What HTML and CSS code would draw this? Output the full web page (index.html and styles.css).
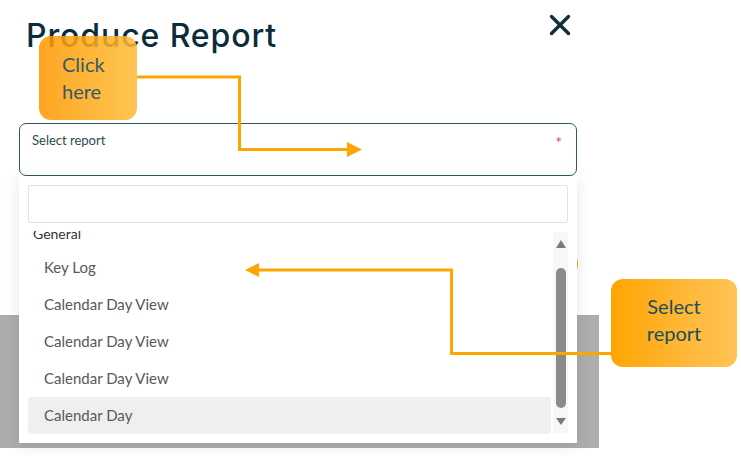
FILE: index.html
```html
<!DOCTYPE html>
<html lang="en">
<head>
<meta charset="utf-8">
<title>Produce Report</title>
<link rel="stylesheet" href="styles.css">
</head>
<body>
<div class="stage">
  <div class="modal">
    <div class="modal-header">
      <h1 class="title">Produce Report</h1>
      <button class="close" aria-label="Close">
        <svg width="22" height="22" viewBox="0 0 22 22"><path d="M2.5 2.5 L19.5 19.5 M19.5 2.5 L2.5 19.5" stroke="#0f2e3b" stroke-width="3.4" stroke-linecap="round" fill="none"/></svg>
      </button>
    </div>
    <div class="select-wrap">
      <div class="select">
        <span class="select-label">Select report</span>
        <span class="required">*</span>
      </div>
      <div class="dropdown">
        <div class="search"></div>
        <div class="dropdown-body">
          <div class="list">
            <div class="group">General</div>
            <div class="item">Key Log</div>
            <div class="item">Calendar Day View</div>
            <div class="item">Calendar Day View</div>
            <div class="item">Calendar Day View</div>
            <div class="item active">Calendar Day</div>
          </div>
          <div class="scrollbar">
            <span class="sb-up"></span>
            <span class="sb-thumb"></span>
            <span class="sb-down"></span>
          </div>
        </div>
      </div>
    </div>
    <div class="actions"><span class="produce-btn"></span></div>
  </div>
  <div class="backdrop"></div>
</div>

<svg class="arrows" width="741" height="456" viewBox="0 0 741 456">
  <path d="M137 77 H239.5 V149.5 H349" stroke="#ffa500" stroke-width="3" fill="none"/>
  <polygon points="347,142 362,149.5 347,157" fill="#ffa500"/>
  <path d="M612 353.5 H451.5 V270 H258" stroke="#ffa500" stroke-width="3" fill="none"/>
  <polygon points="259,263 245,270 259,277" fill="#ffa500"/>
</svg>

<div class="callout callout-click">Click<br>here</div>
<div class="callout callout-select">Select<br>report</div>
</body>
</html>
```

FILE: styles.css
```css
html, body {
  margin: 0;
  padding: 0;
}
body {
  width: 741px;
  height: 456px;
  position: relative;
  overflow: hidden;
  background: #ffffff;
  font-family: "Lato", "Liberation Sans", sans-serif;
}
.stage {
  width: 599px;
}
.modal {
  position: relative;
  height: 315px;
  box-sizing: border-box;
  padding: 0 22px 0 19px;
  background: #ffffff;
  border-radius: 0 0 4px 4px;
  z-index: 2;
}
.modal-header {
  display: flex;
  justify-content: space-between;
  align-items: flex-start;
  height: 56px;
  padding-top: 16px;
  box-sizing: border-box;
}
.title {
  margin: 0 0 0 7px;
  font-family: "Inter", "Lato", sans-serif;
  font-size: 32px;
  line-height: 40px;
  font-weight: 500;
  color: #0b2c3b;
  letter-spacing: 0.9px;
}
.close {
  margin: -2px 6px 0 0;
  padding: 0;
  border: 0;
  background: none;
  width: 22px;
  height: 22px;
  display: block;
}
.close svg {
  display: block;
}
.select-wrap {
  position: relative;
  margin-top: 67px;
}
.select {
  height: 53px;
  box-sizing: border-box;
  border: 1px solid #2f5862;
  border-radius: 7px;
  padding: 8px 14px 0 12px;
  display: flex;
  justify-content: space-between;
  align-items: flex-start;
}
.select-label {
  font-size: 13px;
  line-height: 16px;
  color: #2b4a50;
}
.required {
  font-size: 16px;
  line-height: 16px;
  color: #e8474a;
  margin-top: 2px;
}
.dropdown {
  position: absolute;
  top: 100%;
  left: 0;
  right: 0;
  height: 267px;
  box-sizing: border-box;
  padding: 9px 9px 0 9px;
  background: #ffffff;
  box-shadow: 0 3px 14px rgba(0, 0, 0, 0.10);
  z-index: 5;
}
.search {
  height: 38px;
  box-sizing: border-box;
  border: 1px solid #e2e2e2;
  border-radius: 2px;
  background: #fff;
}
.dropdown-body {
  display: flex;
  margin-top: 8px;
  height: 203px;
}
.list {
  flex: 1;
  overflow: hidden;
}
.group {
  margin-top: -12px;
  height: 30px;
  line-height: 30px;
  padding-left: 5px;
  font-size: 14px;
  color: #333333;
}
.item {
  height: 37px;
  line-height: 37px;
  padding-left: 16px;
  font-size: 15px;
  color: #585858;
  border-radius: 4px;
}
.item.active {
  background: #efefef;
}
.scrollbar {
  width: 15px;
  margin: 1px 0 0 2px;
  height: 201px;
  background: #f8f8f8;
  display: flex;
  flex-direction: column;
  align-items: center;
}
.sb-up {
  margin-top: 8px;
  width: 0;
  height: 0;
  border-left: 5.5px solid transparent;
  border-right: 5.5px solid transparent;
  border-bottom: 8px solid #7b7b7b;
}
.sb-thumb {
  margin-top: 20px;
  width: 10px;
  height: 140px;
  border-radius: 5px;
  background: #8b8b8b;
}
.sb-down {
  margin-top: 10px;
  width: 0;
  height: 0;
  border-left: 5.5px solid transparent;
  border-right: 5.5px solid transparent;
  border-top: 7px solid #7b7b7b;
}
.actions {
  display: flex;
  justify-content: flex-end;
  margin-top: 66px;
  margin-right: -1px;
}
.produce-btn {
  display: block;
  width: 160px;
  height: 44px;
  border-radius: 22px;
  background: #ffa500;
}
.backdrop {
  height: 133px;
  background: #adadad;
}
.arrows {
  position: absolute;
  top: 0;
  left: 0;
  z-index: 10;
  pointer-events: none;
}
.callout {
  position: absolute;
  z-index: 11;
  box-sizing: border-box;
  border-radius: 12px;
  font-family: "Lato", "Liberation Sans", sans-serif;
  font-size: 20px;
  line-height: 27px;
  color: #1e4d5c;
}
.callout-click {
  left: 39px;
  top: 36px;
  width: 98px;
  height: 84px;
  padding: 15px 0 0 23px;
  color: #113f4f;
  background: linear-gradient(90deg, #ff9800 0%, #ffac1c 55%, #ffbb38 100%);
  opacity: 0.86;
}
.callout-select {
  left: 611px;
  top: 279px;
  width: 126px;
  height: 88px;
  padding-top: 14px;
  text-align: center;
  background: linear-gradient(90deg, #ffa500 0%, #ffb83a 60%, #ffc455 100%);
}
```
